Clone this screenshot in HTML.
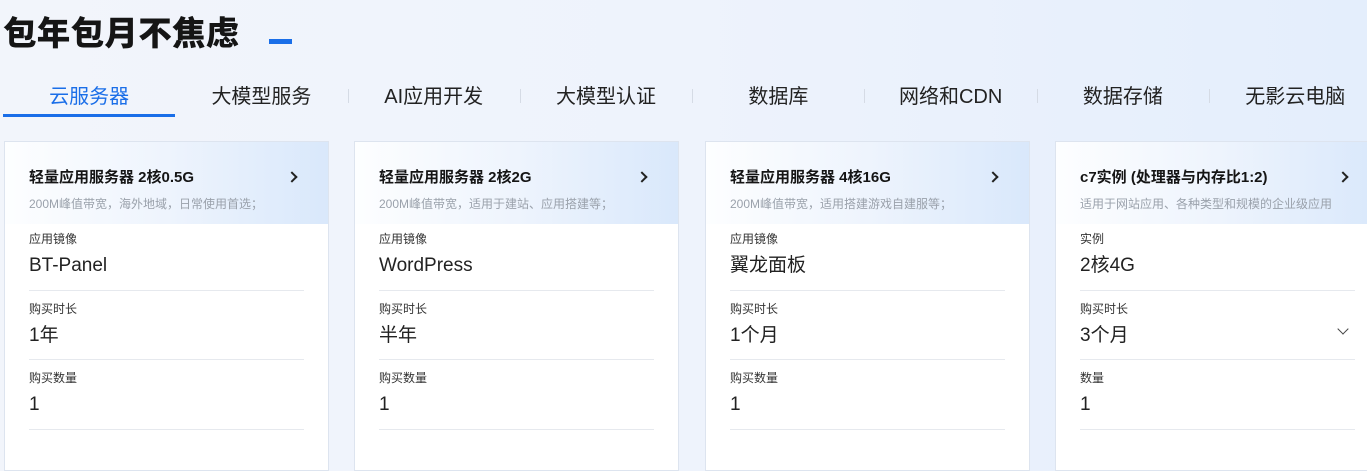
<!DOCTYPE html>
<html><head><meta charset="utf-8"><style>
*{margin:0;padding:0;box-sizing:border-box}
body{width:1367px;height:460px;overflow:hidden;font-family:"Liberation Sans","Noto Sans CJK SC",sans-serif;background:linear-gradient(90deg,#f2f5fb 0%,#eef3fc 50%,#e4eefc 100%);position:relative;color:#181818}
h1{position:absolute;left:3px;top:6px;font-size:33.5px;font-weight:900;letter-spacing:0.3px;color:#151515}
.dash{position:absolute;left:269px;top:39px;width:23px;height:5px;background:#1a6ee8}
.tabs{position:absolute;left:3px;top:83px;height:34px;display:flex}
.tab{width:172.3px;text-align:center;font-size:20px;color:#222;position:relative;line-height:28px}
.tab.sep::before{content:"";position:absolute;left:0;top:6px;width:1px;height:14px;background:#d5dbe5}
.tab.on{color:#1a6ee8}
.tab.on::after{content:"";position:absolute;left:0;top:31px;width:172px;height:3px;background:#1a6ee8}
.card{position:absolute;top:141px;width:325px;height:330px;background:#fff;border:1px solid #dde4ef}
.hd{height:82px;background:linear-gradient(90deg,#fdfeff 0%,#eef4fd 50%,#d9e8fb 100%);padding:24px 0 0 24px;position:relative}
.hd b{font-size:15px;font-weight:700;display:block;color:#151515}
.hd span{font-size:12px;color:#9aa1ab;display:block;margin-top:8px;white-space:nowrap}
.hd i{position:absolute;right:32px;top:31px;width:8px;height:8px;border-right:2px solid #222;border-top:2px solid #222;transform:rotate(45deg)}
.f{margin:0 24px;height:69px;border-bottom:1px solid #e6e9ee;padding-top:10px;position:relative}
.hd+.f{height:67px;padding-top:7px}
.f+.f+.f{height:70px}
.f p{font-size:12px;color:#333;line-height:16px}
.f div{font-size:19px;margin-top:8px;line-height:22px;height:22px;color:#222}
.chev{position:absolute;right:8px;top:34px;width:8px;height:8px;border-right:1.5px solid #444;border-bottom:1.5px solid #444;transform:rotate(45deg)}
</style></head><body>
<h1>包年包月不焦虑</h1><div class="dash"></div>
<div class="tabs">
<div class="tab on">云服务器</div><div class="tab">大模型服务</div><div class="tab sep">AI应用开发</div><div class="tab sep">大模型认证</div><div class="tab sep">数据库</div><div class="tab sep">网络和CDN</div><div class="tab sep">数据存储</div><div class="tab sep">无影云电脑</div>
</div>
<div class="card" style="left:4px"><div class="hd"><b>轻量应用服务器 2核0.5G</b><span>200M峰值带宽，海外地域，日常使用首选；</span><i></i></div>
<div class="f"><p>应用镜像</p><div>BT-Panel</div></div><div class="f"><p>购买时长</p><div>1年</div></div><div class="f"><p>购买数量</p><div>1</div></div></div>
<div class="card" style="left:354px"><div class="hd"><b>轻量应用服务器 2核2G</b><span>200M峰值带宽，适用于建站、应用搭建等；</span><i></i></div>
<div class="f"><p>应用镜像</p><div>WordPress</div></div><div class="f"><p>购买时长</p><div>半年</div></div><div class="f"><p>购买数量</p><div>1</div></div></div>
<div class="card" style="left:705px"><div class="hd"><b>轻量应用服务器 4核16G</b><span>200M峰值带宽，适用搭建游戏自建服等；</span><i></i></div>
<div class="f"><p>应用镜像</p><div>翼龙面板</div></div><div class="f"><p>购买时长</p><div>1个月</div></div><div class="f"><p>购买数量</p><div>1</div></div></div>
<div class="card" style="left:1055px"><div class="hd"><b>c7实例 (处理器与内存比1:2)</b><span>适用于网站应用、各种类型和规模的企业级应用</span><i></i></div>
<div class="f"><p>实例</p><div>2核4G</div></div><div class="f"><p>购买时长</p><div>3个月</div><span class="chev"></span></div><div class="f"><p>数量</p><div>1</div></div></div>
</body></html>
